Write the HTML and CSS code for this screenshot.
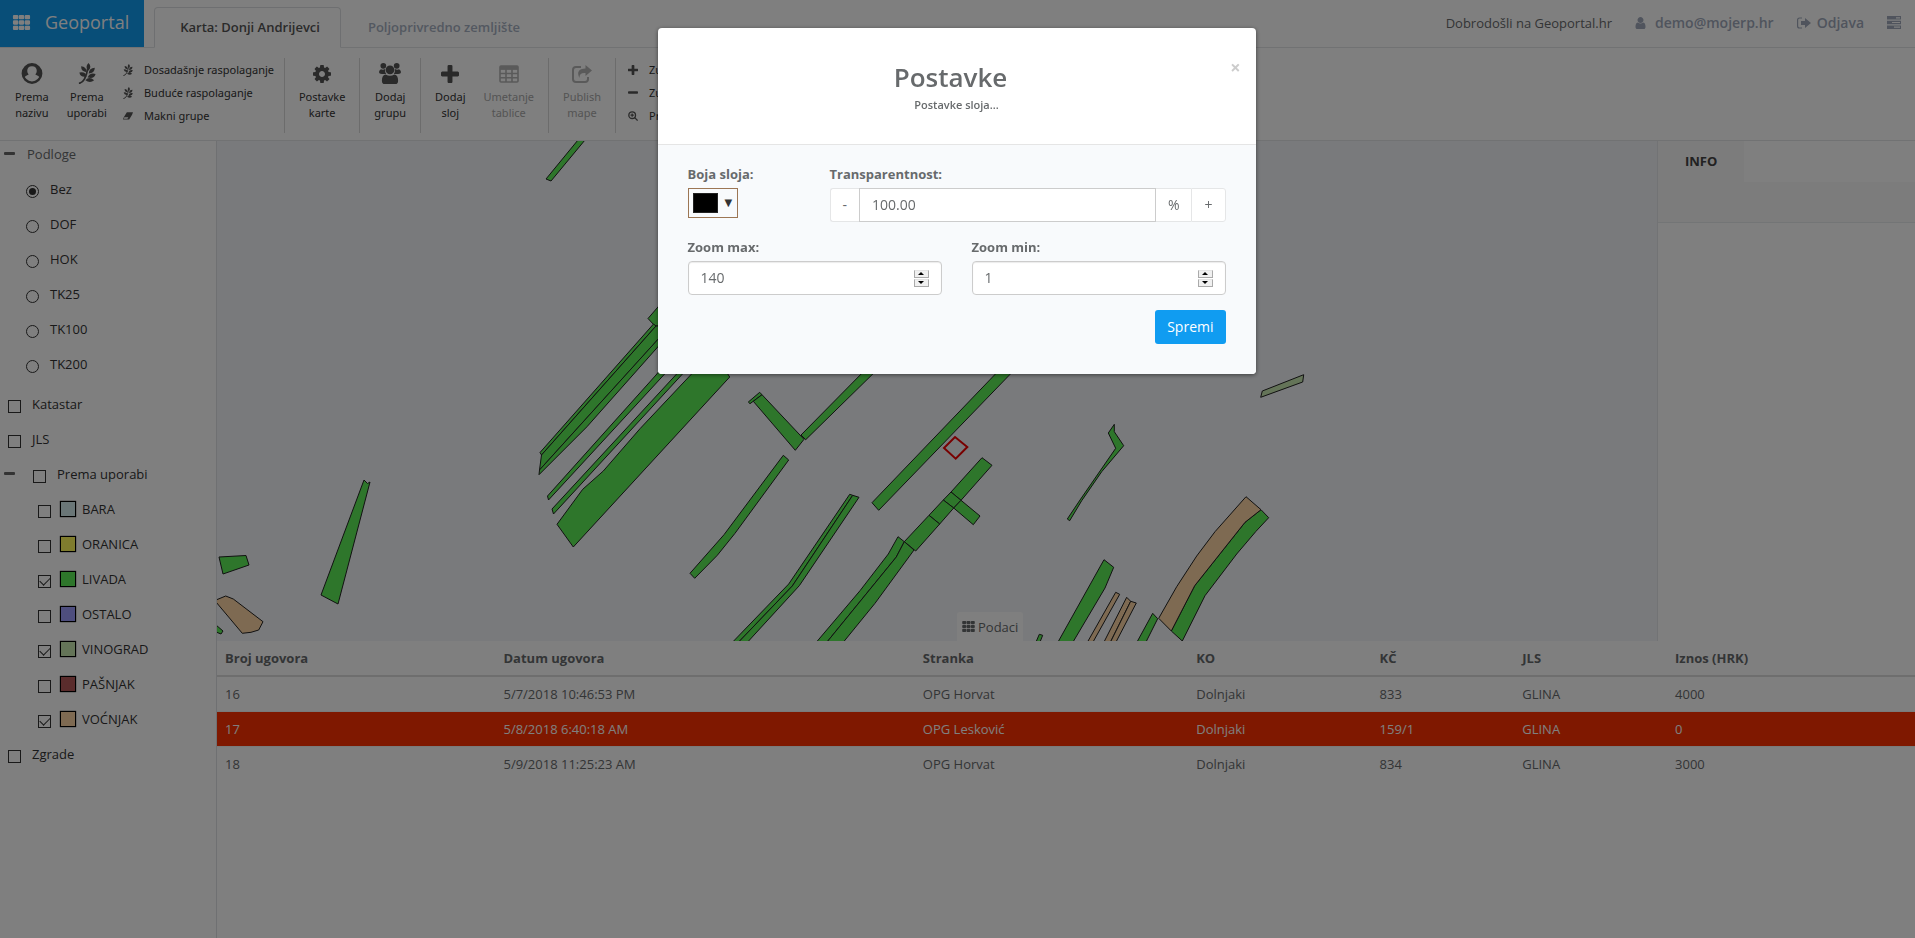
FILE: index.html
```html
<!DOCTYPE html>
<html lang="hr">
<head>
<meta charset="utf-8">
<title>Geoportal</title>
<link rel="stylesheet" href="styles.css">
</head>
<body>
<svg class="defs" aria-hidden="true">
  <symbol id="i-th" viewBox="0 0 16 14"><path d="M1 0h3q1 0 1 1v2q0 1-1 1H1Q0 4 0 3V1q0-1 1-1zm5.500 0h3q1 0 1 1v2q0 1-1 1h-3q-1 0-1-1V1q0-1 1-1zM12 0h3q1 0 1 1v2q0 1-1 1h-3q-1 0-1-1V1q0-1 1-1zM1 5h3q1 0 1 1v2q0 1-1 1H1Q0 9 0 8V6q0-1 1-1zm5.500 0h3q1 0 1 1v2q0 1-1 1h-3q-1 0-1-1V6q0-1 1-1zM12 5h3q1 0 1 1v2q0 1-1 1h-3q-1 0-1-1V6q0-1 1-1zM1 10h3q1 0 1 1v2q0 1-1 1H1q-1 0-1-1v-2q0-1 1-1zm5.500 0h3q1 0 1 1v2q0 1-1 1h-3q-1 0-1-1v-2q0-1 1-1zM12 10h3q1 0 1 1v2q0 1-1 1h-3q-1 0-1-1v-2q0-1 1-1z"/></symbol>
  <symbol id="i-user" viewBox="0 128 1280 1536"><path d="M1280 1399q0 109-62.500 187t-150.500 78h-854q-88 0-150.500-78t-62.500-187q0-85 8.500-160.500t31.500-152 58.500-131 94-89 134.500-34.500q131 128 313 128t313-128q76 0 134.500 34.500t94 89 58.500 131 31.500 152 8.500 160.500zm-256-887q0 159-112.500 271.500t-271.500 112.500-271.500-112.500-112.500-271.500 112.500-271.500 271.500-112.500 271.500 112.500 112.500 271.500z"/></symbol>
  <symbol id="i-out" viewBox="0 0 14 12"><path d="M5 1H2.500Q.6 1 .6 3v6q0 2 1.900 2H5" fill="none" stroke="currentColor" stroke-width="1.200"/><path d="M4 4h4V1l6 5-6 5V8H4z"/></symbol>
  <symbol id="i-tasks" viewBox="0 0 14 13"><path fill-rule="evenodd" d="M0 0h14v3.600H0zm9 1.200v1.200h4V1.200zM0 4.700h14v3.600H0zm5 1.200v1.200h8V5.900zM0 9.400h14V13H0zm7 1.200v1.200h6v-1.200z"/></symbol>
  <symbol id="i-person" viewBox="0 0 22 22"><circle cx="11" cy="11" r="9.600" fill="none" stroke="currentColor" stroke-width="2.600"/><path d="M2.500 15.500q1.500-2.300 5-3.500Q6 10.500 6 8.500q0-5 5-5t5 5q0 2-1.500 3.500 3.500 1.200 5 3.500l1-4.500-2.500-6.500L11 1 4 4.500 1.500 11z"/></symbol>
  <symbol id="i-leaf" viewBox="0 0 18 22"><path d="M.5 21.300q3.500-.3 6-4.800Q9 11.500 9.700 6" fill="none" stroke="currentColor" stroke-width="1.800"/><path d="M10.500 0q4 3.800 0 8-4-3.800 0-8zM2.800 3.500q5.700.5 5.900 6.200-5.900-.5-5.900-6.200zM17.200 5q-.2 6-6.400 6 .4-5.800 6.400-6zM1 10q6.500-1.500 7.500 4.300Q2 15.500 1 10zM18 11.500q-1.500 5.700-8.300 3.700 2-5.400 8.300-3.700zM16.500 18q-4.300 3.700-9.200 0 4-4.500 9.200 0z"/></symbol>
  <symbol id="i-eraser" viewBox="0 0 13 10"><path d="M5 0h8l-1.200 3.500L8 9.500H0l1-3zM1.700 6.700L1.200 8.500h4.500l1.300-2z" fill-rule="evenodd"/></symbol>
  <symbol id="i-gear" viewBox="128 128 1536 1536"><path d="M1152 896q0-106-75-181t-181-75-181 75-75 181 75 181 181 75 181-75 75-181zm512-109v222q0 12-8 23t-20 13l-185 28q-19 54-39 91 35 50 107 138 10 12 10 25t-9 23q-27 37-99 108t-94 71q-12 0-26-9l-138-108q-44 23-91 38-16 136-29 186-7 28-36 28h-222q-14 0-24.500-8.500t-11.500-21.500l-28-184q-49-16-90-37l-141 107q-10 9-25 9-14 0-25-11-126-114-165-168-7-10-7-23 0-12 8-23 15-21 51-66.500t54-70.500q-27-50-41-99l-183-27q-13-2-21-12.500t-8-23.500v-222q0-12 8-23t19-13l186-28q14-46 39-92-40-57-107-138-10-12-10-24 0-10 9-23 26-36 98.500-107.500t94.500-71.500q13 0 26 10l138 107q44-23 91-38 16-136 29-186 7-28 36-28h222q14 0 24.500 8.500t11.500 21.500l28 184q49 16 90 37l142-107q9-9 24-9 13 0 25 10 129 119 165 170 7 8 7 22 0 12-8 23-15 21-51 66.500t-54 70.500q26 50 41 98l183 28q13 2 21 12.500t8 23.500z"/></symbol>
  <symbol id="i-group" viewBox="0 0 24 22"><circle cx="5" cy="3" r="3"/><circle cx="19" cy="3" r="3"/><circle cx="12" cy="7.200" r="4.600"/><path d="M2.500 6.500Q4.500 7.500 6.800 6.300 6.500 9.500 8 11.500H3.500Q.5 11.500.5 9.500q0-2 2-3zM21.500 6.500q-2 1-4.300-.2.300 3.200-1.200 5.200h4.500q3 0 3-2 0-2-2-3zM7.500 12q4.500 2.500 9 0 4 .5 4 6.500 0 3.500-3 3.500h-11q-3 0-3-3.500 0-6 4-6.500z"/></symbol>
  <symbol id="i-plus" viewBox="192 128 1408 1408"><path d="M1600 736v192q0 40-28 68t-68 28h-416v416q0 40-28 68t-68 28h-192q-40 0-68-28t-28-68v-416h-416q-40 0-68-28t-28-68v-192q0-40 28-68t68-28h416v-416q0-40 28-68t68-28h192q40 0 68 28t28 68v416h416q40 0 68 28t28 68z"/></symbol>
  <symbol id="i-minus" viewBox="0 0 12 12"><rect x="0" y="4" width="12" height="3" rx="1"/></symbol>
  <symbol id="i-table" viewBox="0 0 20 18"><path d="M2 1h16q1 0 1 1v14q0 1-1 1H2q-1 0-1-1V2q0-1 1-1zM1 4h18M1 8.500h18M1 12.700h18M7 4v13M13 4v13" fill="none" stroke="currentColor" stroke-width="1.600"/><path d="M1 1h18v3.500H1z"/></symbol>
  <symbol id="i-share" viewBox="0 0 20 18"><path d="M9 2H4Q1 2 1 5v9q0 3 3 3h9q3 0 3-3v-2" fill="none" stroke="currentColor" stroke-width="2"/><path d="M13.500 0L20 5.500 13.500 11V8Q7 7.500 7.500 13 3 4 13.500 3.500z"/></symbol>
  <symbol id="i-zoom" viewBox="0 0 12 12"><circle cx="5" cy="5" r="4" fill="none" stroke="currentColor" stroke-width="1.600"/><path d="M8 8l3.500 3.500M5 3v4M3 5h4" stroke="currentColor" stroke-width="1.500"/></symbol>
</svg>

<div class="page">
  <header class="topbar">
    <a class="brand" href="#"><svg class="brand-icon"><use href="#i-th"/></svg>Geoportal</a>
    <nav class="tabs">
      <a class="tab tab-active" href="#">Karta: Donji Andrijevci</a>
      <a class="tab" href="#">Poljoprivredno zemljište</a>
    </nav>
    <div class="account">
      <span class="welcome">Dobrodošli na Geoportal.hr</span>
      <a class="account-link account-user" href="#"><svg class="icon-user"><use href="#i-user"/></svg>demo@mojerp.hr</a>
      <a class="account-link" href="#"><svg class="icon-out"><use href="#i-out"/></svg>Odjava</a>
      <a class="account-link account-tasks" href="#" aria-label="Zadaci"><svg class="icon-tasks"><use href="#i-tasks"/></svg></a>
    </div>
  </header>

  <div class="toolbar">
    <div class="tool-group tool-group-main">
      <button class="tool"><svg class="tool-icon"><use href="#i-person"/></svg><span>Prema<br>nazivu</span></button>
      <button class="tool"><svg class="tool-icon"><use href="#i-leaf"/></svg><span>Prema<br>uporabi</span></button>
      <div class="tool-list">
        <button class="tool-row"><svg class="row-icon"><use href="#i-leaf"/></svg>Dosadašnje raspolaganje</button>
        <button class="tool-row"><svg class="row-icon"><use href="#i-leaf"/></svg>Buduće raspolaganje</button>
        <button class="tool-row"><svg class="row-icon"><use href="#i-eraser"/></svg>Makni grupe</button>
      </div>
    </div>
    <div class="tool-group"><button class="tool"><svg class="tool-icon tool-icon-small"><use href="#i-gear"/></svg><span>Postavke<br>karte</span></button></div>
    <div class="tool-group"><button class="tool"><svg class="tool-icon tool-icon-wide"><use href="#i-group"/></svg><span>Dodaj<br>grupu</span></button></div>
    <div class="tool-group">
      <button class="tool"><svg class="tool-icon tool-icon-small"><use href="#i-plus"/></svg><span>Dodaj<br>sloj</span></button>
      <button class="tool" disabled><svg class="tool-icon tool-icon-small"><use href="#i-table"/></svg><span>Umetanje<br>tablice</span></button>
    </div>
    <div class="tool-group"><button class="tool" disabled><svg class="tool-icon tool-icon-small"><use href="#i-share"/></svg><span>Publish<br>mape</span></button></div>
    <div class="tool-group">
      <div class="tool-list">
        <button class="tool-row"><svg class="row-icon"><use href="#i-plus"/></svg>Zumiraj</button>
        <button class="tool-row"><svg class="row-icon"><use href="#i-minus"/></svg>Zumiraj</button>
        <button class="tool-row"><svg class="row-icon"><use href="#i-zoom"/></svg>Prikaz</button>
      </div>
    </div>
  </div>

  <div class="workspace">
    <aside class="layers">
      <div class="layer layer-title"><span class="collapse"></span>Podloge</div>
      <div class="base-layers">
        <label class="layer"><input type="radio" name="base" checked>Bez</label>
        <label class="layer"><input type="radio" name="base">DOF</label>
        <label class="layer"><input type="radio" name="base">HOK</label>
        <label class="layer"><input type="radio" name="base">TK25</label>
        <label class="layer"><input type="radio" name="base">TK100</label>
        <label class="layer"><input type="radio" name="base">TK200</label>
      </div>
      <label class="layer layer-top"><input type="checkbox">Katastar</label>
      <label class="layer layer-top"><input type="checkbox">JLS</label>
      <div class="layer layer-group"><span class="collapse"></span><label class="group-label"><input type="checkbox">Prema uporabi</label></div>
      <div class="use-layers">
        <label class="layer"><input type="checkbox"><span class="swatch bara"></span>BARA</label>
        <label class="layer"><input type="checkbox"><span class="swatch oranica"></span>ORANICA</label>
        <label class="layer"><input type="checkbox" checked><span class="swatch livada"></span>LIVADA</label>
        <label class="layer"><input type="checkbox"><span class="swatch ostalo"></span>OSTALO</label>
        <label class="layer"><input type="checkbox" checked><span class="swatch vinograd"></span>VINOGRAD</label>
        <label class="layer"><input type="checkbox"><span class="swatch pasnjak"></span>PAŠNJAK</label>
        <label class="layer"><input type="checkbox" checked><span class="swatch vocnjak"></span>VOĆNJAK</label>
      </div>
      <label class="layer layer-top"><input type="checkbox">Zgrade</label>
    </aside>

    <main class="content">
      <div class="upper">
        <div class="map">
          <svg class="map-canvas" viewBox="217 141 1440 500" preserveAspectRatio="xMinYMin slice">
            <g class="parcel">
              <path d="M364 480l3.500 3.500L370 482 338 604l-17-9z"/>
              <path d="M219 557l27-1.500 3 9.500-26 9z"/>
              <path d="M216 625l7 6-2 3-5-2z"/>
              <path d="M578 140h7L551 181l-5-2z"/>
              <path d="M670 293L648 318.500l7 7.500 15 0z"/>
              <path d="M653.500 324L540 452.500l1.500 2.500L656 326z"/>
              <path d="M656 326L541.500 455 539.500 470 658 339.500 670 326z"/>
              <path d="M539.500 470l-.5 4.700L587 426.700 658 346.700 670 326z"/>
              <path d="M665 364l-9 11L547.500 496l1 4L665.300 373.300z"/>
              <path d="M684 366L552 509l1.500 5L688 368z"/>
              <path d="M700 365L640 428.700 603.300 471 582.700 489.300 557 524.300 573.300 547 729.700 377 722 365z"/>
              <path d="M748.300 402L759.700 392.300 762 394.700 750 403.700z"/>
              <path d="M762 394.700L753.300 401.300 795.300 450.300 804 439.300z"/>
              <path d="M801 435l4.700 4.700L884 363h-12z"/>
              <path d="M783.300 455.300l5.400 4.700L735 533.300 717.300 555.300 694.700 578.300 690 573.300 724 534.700z"/>
              <path d="M1005 364L872 502.700l6.700 7.600L1021 363z"/>
              <path d="M849.700 494.300l3 1L792.300 586 738.700 642h-6L788.700 584z"/>
              <path d="M852.700 495.300l6.300 2L799.300 585.700 747.700 642h-9L792.300 586z"/>
              <path d="M982 457.700l10 7.600L961 500.300 951 492z"/>
              <path d="M951 492l10 8.300-7.300 7.700-10.400-8z"/>
              <path d="M961 500.300L980 516l-6.700 8.700L953.700 508z"/>
              <path d="M943.300 500l10.400 8L939.700 524 929 515.300z"/>
              <path d="M929 515.300l10.700 8.700L915.700 551 904.300 541.700z"/>
              <path d="M898 536.700l6.300 5-8 15.300L827 642h-10.500L860 590.700 888.300 554z"/>
              <path d="M904.300 541.700L914 550 875 603.300 843.500 642H827L896.300 557z"/>
              <path d="M1114.300 424.300L1108.300 433l7.400 15.300L1080 500 1067.300 519l2.400 1.700 12-20L1101.700 471.700l22-26-9.400-14z"/>
              <path d="M1261 509.700l7.700 8L1256 531.300 1236.700 554 1205 595.700 1182.300 641 1171.300 631 1194.700 585.700 1245 522.300z"/>
              <path d="M1104 559.700l9.700 7.600L1105 588 1073 642h-15z"/>
              <path d="M1152.700 613.300l5 5.400L1146 642h-9z"/>
              <path d="M1039.300 634.300l3.400 1L1040 642h-4z"/>
            </g>
            <g class="parcel orchard">
              <path d="M216 600l9.700-4 7.600 3L263 621.700 258.700 630l-7.700 2.300-8.700 1L216 602z"/>
              <path d="M1246 496.700l15 13-16 12.600L1194.700 585.700 1171.300 631 1158.700 618.300 1176.700 586.700 1196.700 556 1215 531.700z"/>
              <path d="M1115.700 592.300l4 2L1093 642h-5.500z"/>
              <path d="M1126.700 597.300l4 4L1110.500 642H1104z"/>
              <path d="M1130.700 601.300l5.600 1.700L1116 642h-5.500z"/>
            </g>
            <path class="parcel vineyard" d="M1262.300 391L1303.700 374.700l-1 7.300-42 15.300z"/>
            <path class="marker" d="M955 437l12.300 10-11.600 11.700L944 448z"/>
          </svg>
          <button class="data-tab"><svg class="data-icon"><use href="#i-th"/></svg>Podaci</button>
        </div>
        <section class="info">
          <div class="info-tabs"><a class="info-tab" href="#">INFO</a></div>
          <div class="info-strip"></div>
        </section>
      </div>

      <table class="contracts">
        <colgroup><col class="c-num"><col class="c-date"><col class="c-party"><col class="c-ko"><col class="c-kc"><col class="c-jls"><col></colgroup>
        <thead><tr><th>Broj ugovora</th><th>Datum ugovora</th><th>Stranka</th><th>KO</th><th>KČ</th><th>JLS</th><th>Iznos (HRK)</th></tr></thead>
        <tbody>
          <tr><td>16</td><td>5/7/2018 10:46:53 PM</td><td>OPG Horvat</td><td>Dolnjaki</td><td>833</td><td>GLINA</td><td>4000</td></tr>
          <tr class="selected"><td>17</td><td>5/8/2018 6:40:18 AM</td><td>OPG Lesković</td><td>Dolnjaki</td><td>159/1</td><td>GLINA</td><td>0</td></tr>
          <tr><td>18</td><td>5/9/2018 11:25:23 AM</td><td>OPG Horvat</td><td>Dolnjaki</td><td>834</td><td>GLINA</td><td>3000</td></tr>
        </tbody>
      </table>
    </main>
  </div>
</div>

<div class="backdrop">
  <form class="modal" role="dialog" aria-labelledby="modal-title">
    <div class="modal-head">
      <button class="close" type="button" aria-label="Zatvori">×</button>
      <h1 class="modal-title" id="modal-title">Postavke</h1>
      <p class="modal-sub">Postavke sloja...</p>
    </div>
    <div class="modal-body">
      <div class="fields fields-style">
        <div class="field">
          <label for="color">Boja sloja:</label>
          <button class="color" id="color" type="button"><span class="color-chip"></span>▼</button>
        </div>
        <div class="field">
          <label for="opacity">Transparentnost:</label>
          <div class="stepper">
            <button class="step step-first" type="button">-</button>
            <input class="step-input" id="opacity" type="text" value="100.00">
            <span class="step unit">%</span>
            <button class="step step-last" type="button">+</button>
          </div>
        </div>
      </div>
      <div class="fields">
        <div class="field">
          <label for="zmax">Zoom max:</label>
          <div class="number"><input id="zmax" type="number" value="140"><span class="spin"><button type="button" class="spin-up" aria-label="Više"></button><button type="button" class="spin-down" aria-label="Manje"></button></span></div>
        </div>
        <div class="field">
          <label for="zmin">Zoom min:</label>
          <div class="number"><input id="zmin" type="number" value="1"><span class="spin"><button type="button" class="spin-up" aria-label="Više"></button><button type="button" class="spin-down" aria-label="Manje"></button></span></div>
        </div>
      </div>
      <button class="save" type="button">Spremi</button>
    </div>
  </form>
</div>
</body>
</html>
```
FILE: styles.css
```css
* { box-sizing: border-box; }

body {
  margin: 0;
  font: 13px/18px "Open Sans", sans-serif;
  color: #676a6c;
  background: #fff;
}

a { color: inherit; text-decoration: none; }

button, input { font: inherit; color: inherit; margin: 0; }

button { padding: 0; border: 0; background: none; }

svg { fill: currentColor; flex: none; }

.defs { display: none; }

.page {
  display: flex;
  flex-direction: column;
  min-height: 100vh;
}

/* Top bar */
.topbar {
  display: flex;
  height: 48px;
  border-bottom: 1px solid #e2e4e6;
}

.brand {
  display: flex;
  align-items: center;
  gap: 14px;
  height: 47px;
  padding: 0 15px 3px 12px;
  background: #109cf1;
  color: #fff;
  font-size: 18px;
}

.brand-icon { width: 19px; height: 15px; }

.tabs { display: flex; margin: 7px 0 -1px 10px; }

.tab {
  padding: 11px 28px 0 27px;
  color: #a7b1c2;
  font-weight: 600;
}

.tab-active {
  padding: 10px 20px 0 25px;
  border: 1px solid #dddfe2;
  border-bottom-color: #fff;
  border-radius: 4px 4px 0 0;
  background: #fff;
  color: #555;
}

.account {
  display: flex;
  align-items: center;
  gap: 23px;
  margin-left: auto;
  padding: 0 14px 2px 0;
}

.account-link {
  display: flex;
  align-items: center;
  gap: 6px;
  color: #a0a9bb;
  font-size: 14px;
  font-weight: 600;
}

.account-user { gap: 9px; }
.icon-user { width: 11px; height: 12px; }
.icon-out { width: 14px; height: 12px; }
.icon-tasks { width: 14px; height: 13px; }

/* Toolbar */
.toolbar {
  display: flex;
  padding: 10px 0 7px;
  height: 93px;
  border-bottom: 1px solid #e2e4e6;
  font: 11px/16px "Noto Sans", sans-serif;
  color: #333;
}

.tool-group {
  display: flex;
  gap: 2px;
  padding: 4px 6px 0;
  border-right: 1px solid #d8d8d8;
}

.tool-group-main { padding: 4px 8px 0 7px; }

.tool-group:last-child { border-right: 0; }

.tool {
  display: flex;
  flex-direction: column;
  align-items: center;
  padding: 1px 8px 0;
}

.tool:disabled { color: #a8a8a8; }

.tool-icon {
  width: 22px;
  height: 21px;
  margin-bottom: 5px;
  color: #555;
}

.tool-icon-wide { width: 24px; }

.tool-icon-small { height: 18px; margin: 2px 0 6px; }

.tool:disabled .tool-icon { color: #b4b4b4; }

.tool-list {
  display: flex;
  flex-direction: column;
  gap: 7px;
  padding: 0 2px 0 6px;
}

.tool-row {
  display: flex;
  align-items: center;
  gap: 11px;
  text-align: left;
}

.row-icon { width: 10px; height: 12px; color: #555; }

/* Layer tree */
.workspace { display: flex; flex: 1; }

.layers {
  flex: none;
  width: 217px;
  padding-top: 3px;
  border-right: 1px solid #dfe1e5;
  color: #333;
}

.layer {
  display: flex;
  align-items: center;
  height: 20px;
  margin-bottom: 15px;
}

.layer input {
  flex: none;
  display: grid;
  place-items: center;
  appearance: none;
  width: 13px;
  height: 13px;
  margin: 4px 11px 0 0;
  border: 1px solid #333;
}

.layer input[type="radio"] { border-radius: 50%; }

.layer input[type="radio"]:checked::after {
  content: "";
  width: 7px;
  height: 7px;
  border-radius: 50%;
  background: #333;
}

.layer input[type="checkbox"]:checked::after {
  content: "";
  width: 9px;
  height: 5px;
  margin-bottom: 2px;
  border: solid #333;
  border-width: 0 0 1px 1px;
  transform: rotate(-45deg);
}

.layer-title { color: #676a6c; padding-left: 4px; }

.collapse {
  width: 11px;
  height: 3px;
  margin: 0 12px 2px 0;
  border-radius: 1px;
  background: #666;
}

.base-layers { padding-left: 26px; margin-bottom: 20px; }

.layer-top { padding-left: 8px; }

.layer-group { padding-left: 4px; }

.layer-group .collapse { margin-right: 18px; }

.group-label { display: flex; align-items: center; }

.use-layers { padding-left: 38px; }

.use-layers .layer input { margin-right: 9px; }

.swatch {
  width: 16px;
  height: 16px;
  margin-right: 6px;
  border: 1px solid #000;
  box-shadow: 0 0 1px #000;
}

.bara { background: #d4ecee; }
.oranica { background: #fff95c; }
.livada { background: #5cec56; }
.ostalo { background: #9c9cfc; }
.vinograd { background: #c8e8b0; }
.pasnjak { background: #b45858; }
.vocnjak { background: #fcd4a4; }

/* Map and info panel */
.content {
  display: flex;
  flex: 1;
  flex-direction: column;
  min-width: 0;
}

.upper { display: flex; height: 500px; }

.map {
  position: relative;
  flex: 1;
  overflow: hidden;
  background: #f3f5f9;
}

.map-canvas { display: block; width: 100%; height: 100%; }

.parcel { fill: #5cec56; stroke: #222; stroke-width: 1; }
.orchard { fill: #fcd4a4; }
.vineyard { fill: #c8e8b0; }
.marker { fill: none; stroke: #f00000; stroke-width: 2; }

.data-tab {
  position: absolute;
  bottom: 0;
  left: 740px;
  display: flex;
  align-items: center;
  gap: 3px;
  height: 29px;
  padding: 0 5px;
  border-radius: 3px 3px 0 0;
  background: #fff;
}

.data-icon { width: 13px; height: 11px; }

.info {
  flex: none;
  width: 258px;
  border-left: 1px solid #e4e6ea;
}

.info-tabs { display: flex; height: 41px; }

.info-tab {
  padding: 11px 27px 12px;
  background: #f9f9f9;
  color: #444;
  font-size: 13px;
  font-weight: 700;
}

.info-strip {
  height: 41px;
  border-bottom: 1px solid #e7eaec;
  background: #f9f9f9;
}

/* Contracts table */
.contracts {
  width: 100%;
  border-collapse: separate;
  border-spacing: 0;
  table-layout: fixed;
}

.contracts th {
  padding: 8px;
  border-bottom: 2px solid #ddd;
  font-weight: 700;
  text-align: left;
}

.contracts td { padding: 8px; border-bottom: 1px solid #f4f4f4; }

.contracts tbody tr:last-child td { border-bottom: 0; }

.contracts .selected td { background: #ff3000; color: #fff; }

.c-num { width: 16.4%; }
.c-date { width: 24.7%; }
.c-party { width: 16.1%; }
.c-ko { width: 10.8%; }
.c-kc { width: 8.4%; }
.c-jls { width: 9%; }

/* Settings dialog */
.backdrop {
  position: fixed;
  inset: 0;
  display: flex;
  justify-content: center;
  align-items: flex-start;
  padding: 28px 2px 0 0;
  background: rgba(0, 0, 0, .5);
}

.modal {
  width: 598px;
  border-radius: 4px;
  background: #fff;
  box-shadow: 0 1px 4px rgba(0, 0, 0, .5);
  overflow: hidden;
}

.modal-head {
  position: relative;
  padding: 34px 30px 28px;
  border-bottom: 1px solid #e5e5e5;
  text-align: center;
}

.close {
  position: absolute;
  top: 29px;
  right: 15px;
  color: #ccc;
  font-size: 18px;
  font-weight: 700;
  line-height: 20px;
}

.modal-title {
  margin: 0 12px 0 0;
  font-size: 26px;
  font-weight: 600;
  line-height: 30px;
}

.modal-sub {
  margin: 6px 0 4px;
  font-size: 11px;
  font-weight: 600;
  line-height: 14px;
}

.modal-body {
  display: flex;
  flex-direction: column;
  gap: 15px;
  padding: 19px 30px 30px;
  background: #f8fafc;
}

.fields {
  display: grid;
  grid-template-columns: 1fr 1fr;
  gap: 30px;
}

.fields-style { grid-template-columns: 112px 1fr; }

.field label {
  display: block;
  margin-bottom: 4px;
  font-weight: 700;
  line-height: 20px;
}

.color {
  display: flex;
  align-items: center;
  gap: 7px;
  height: 30px;
  padding: 0 5px 0 4px;
  border: 1px solid #9c7654;
  color: #333;
  font: 10px/14px "DejaVu Sans", sans-serif;
}

.color-chip {
  width: 25px;
  height: 20px;
  border: 1px solid #222;
  background: #000;
}

.stepper { display: flex; height: 34px; font-size: 14px; }

.step {
  padding: 6px 12px;
  border: 1px solid #e5e6e7;
  background: #fff;
  line-height: 20px;
}

.step-first { border-right: 0; border-radius: 3px 0 0 3px; }
.unit { border-left: 0; border-right: 0; }
.step-last { border-radius: 0 3px 3px 0; }

.step-input {
  flex: 1;
  min-width: 0;
  padding: 6px 12px;
  border: 1px solid #ccc;
  background: #fff;
}

.number {
  display: flex;
  align-items: center;
  height: 34px;
  padding: 0 12px;
  border: 1px solid #ccc;
  border-radius: 4px;
  background: #fff;
  box-shadow: inset 0 1px 1px rgba(0, 0, 0, .08);
  font-size: 14px;
}

.number input {
  flex: 1;
  min-width: 0;
  padding: 0;
  border: 0;
  background: none;
  appearance: textfield;
}

.number input::-webkit-inner-spin-button { appearance: none; }

.spin { display: grid; gap: 1px; }

.spin button {
  display: grid;
  place-items: center;
  width: 15px;
  height: 8px;
  border: 1px solid #aaa;
  border-top-color: #e4e4e4;
  background: #f0f0f0;
}

.spin button::after {
  content: "";
  border: 3px solid transparent;
}

.spin .spin-up::after { border-top: 0; border-bottom-color: #000; }
.spin .spin-down::after { border-bottom: 0; border-top-color: #000; }

.save {
  align-self: flex-end;
  padding: 7px 12px;
  border-radius: 3px;
  background: #109cf1;
  color: #fff;
  font-size: 14px;
  line-height: 20px;
}
```
